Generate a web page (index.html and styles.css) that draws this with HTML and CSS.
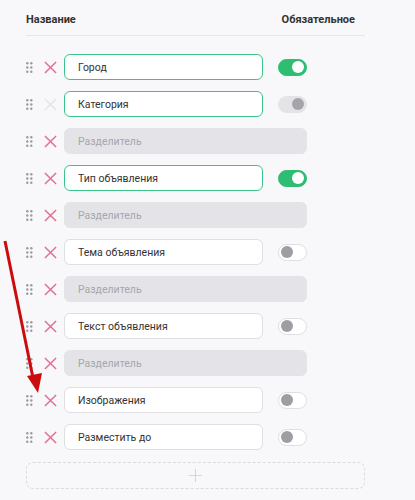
FILE: index.html
```html
<!DOCTYPE html>
<html lang="ru">
<head>
<meta charset="utf-8">
<link rel="stylesheet" href="styles.css">
</head>
<body>
<div class="panel">
  <div class="head">
    <span>Название</span>
    <span class="head-req">Обязательное</span>
  </div>
  <div class="rows">
    <div class="row">
      <svg class="drag" viewBox="0 0 7 11"><circle cx="1.3" cy="1.3" r="1.2"/><circle cx="5.3" cy="1.3" r="1.2"/><circle cx="1.3" cy="5.5" r="1.2"/><circle cx="5.3" cy="5.5" r="1.2"/><circle cx="1.3" cy="9.7" r="1.2"/><circle cx="5.3" cy="9.7" r="1.2"/></svg>
      <svg class="del" viewBox="0 0 14 14"><path d="M1 1L13 13M13 1L1 13"/></svg>
      <div class="field active">Город</div>
      <div class="toggle on"><span class="knob"></span></div>
    </div>
    <div class="row">
      <svg class="drag" viewBox="0 0 7 11"><circle cx="1.3" cy="1.3" r="1.2"/><circle cx="5.3" cy="1.3" r="1.2"/><circle cx="1.3" cy="5.5" r="1.2"/><circle cx="5.3" cy="5.5" r="1.2"/><circle cx="1.3" cy="9.7" r="1.2"/><circle cx="5.3" cy="9.7" r="1.2"/></svg>
      <svg class="del muted" viewBox="0 0 14 14"><path d="M1 1L13 13M13 1L1 13"/></svg>
      <div class="field active">Категория</div>
      <div class="toggle disabled"><span class="knob"></span></div>
    </div>
    <div class="row">
      <svg class="drag" viewBox="0 0 7 11"><circle cx="1.3" cy="1.3" r="1.2"/><circle cx="5.3" cy="1.3" r="1.2"/><circle cx="1.3" cy="5.5" r="1.2"/><circle cx="5.3" cy="5.5" r="1.2"/><circle cx="1.3" cy="9.7" r="1.2"/><circle cx="5.3" cy="9.7" r="1.2"/></svg>
      <svg class="del" viewBox="0 0 14 14"><path d="M1 1L13 13M13 1L1 13"/></svg>
      <div class="field sep">Разделитель</div>
    </div>
    <div class="row">
      <svg class="drag" viewBox="0 0 7 11"><circle cx="1.3" cy="1.3" r="1.2"/><circle cx="5.3" cy="1.3" r="1.2"/><circle cx="1.3" cy="5.5" r="1.2"/><circle cx="5.3" cy="5.5" r="1.2"/><circle cx="1.3" cy="9.7" r="1.2"/><circle cx="5.3" cy="9.7" r="1.2"/></svg>
      <svg class="del" viewBox="0 0 14 14"><path d="M1 1L13 13M13 1L1 13"/></svg>
      <div class="field active">Тип объявления</div>
      <div class="toggle on"><span class="knob"></span></div>
    </div>
    <div class="row">
      <svg class="drag" viewBox="0 0 7 11"><circle cx="1.3" cy="1.3" r="1.2"/><circle cx="5.3" cy="1.3" r="1.2"/><circle cx="1.3" cy="5.5" r="1.2"/><circle cx="5.3" cy="5.5" r="1.2"/><circle cx="1.3" cy="9.7" r="1.2"/><circle cx="5.3" cy="9.7" r="1.2"/></svg>
      <svg class="del" viewBox="0 0 14 14"><path d="M1 1L13 13M13 1L1 13"/></svg>
      <div class="field sep">Разделитель</div>
    </div>
    <div class="row">
      <svg class="drag" viewBox="0 0 7 11"><circle cx="1.3" cy="1.3" r="1.2"/><circle cx="5.3" cy="1.3" r="1.2"/><circle cx="1.3" cy="5.5" r="1.2"/><circle cx="5.3" cy="5.5" r="1.2"/><circle cx="1.3" cy="9.7" r="1.2"/><circle cx="5.3" cy="9.7" r="1.2"/></svg>
      <svg class="del" viewBox="0 0 14 14"><path d="M1 1L13 13M13 1L1 13"/></svg>
      <div class="field">Тема объявления</div>
      <div class="toggle"><span class="knob"></span></div>
    </div>
    <div class="row">
      <svg class="drag" viewBox="0 0 7 11"><circle cx="1.3" cy="1.3" r="1.2"/><circle cx="5.3" cy="1.3" r="1.2"/><circle cx="1.3" cy="5.5" r="1.2"/><circle cx="5.3" cy="5.5" r="1.2"/><circle cx="1.3" cy="9.7" r="1.2"/><circle cx="5.3" cy="9.7" r="1.2"/></svg>
      <svg class="del" viewBox="0 0 14 14"><path d="M1 1L13 13M13 1L1 13"/></svg>
      <div class="field sep">Разделитель</div>
    </div>
    <div class="row">
      <svg class="drag" viewBox="0 0 7 11"><circle cx="1.3" cy="1.3" r="1.2"/><circle cx="5.3" cy="1.3" r="1.2"/><circle cx="1.3" cy="5.5" r="1.2"/><circle cx="5.3" cy="5.5" r="1.2"/><circle cx="1.3" cy="9.7" r="1.2"/><circle cx="5.3" cy="9.7" r="1.2"/></svg>
      <svg class="del" viewBox="0 0 14 14"><path d="M1 1L13 13M13 1L1 13"/></svg>
      <div class="field">Текст объявления</div>
      <div class="toggle"><span class="knob"></span></div>
    </div>
    <div class="row">
      <svg class="drag" viewBox="0 0 7 11"><circle cx="1.3" cy="1.3" r="1.2"/><circle cx="5.3" cy="1.3" r="1.2"/><circle cx="1.3" cy="5.5" r="1.2"/><circle cx="5.3" cy="5.5" r="1.2"/><circle cx="1.3" cy="9.7" r="1.2"/><circle cx="5.3" cy="9.7" r="1.2"/></svg>
      <svg class="del" viewBox="0 0 14 14"><path d="M1 1L13 13M13 1L1 13"/></svg>
      <div class="field sep">Разделитель</div>
    </div>
    <div class="row">
      <svg class="drag" viewBox="0 0 7 11"><circle cx="1.3" cy="1.3" r="1.2"/><circle cx="5.3" cy="1.3" r="1.2"/><circle cx="1.3" cy="5.5" r="1.2"/><circle cx="5.3" cy="5.5" r="1.2"/><circle cx="1.3" cy="9.7" r="1.2"/><circle cx="5.3" cy="9.7" r="1.2"/></svg>
      <svg class="del" viewBox="0 0 14 14"><path d="M1 1L13 13M13 1L1 13"/></svg>
      <div class="field">Изображения</div>
      <div class="toggle"><span class="knob"></span></div>
    </div>
    <div class="row">
      <svg class="drag" viewBox="0 0 7 11"><circle cx="1.3" cy="1.3" r="1.2"/><circle cx="5.3" cy="1.3" r="1.2"/><circle cx="1.3" cy="5.5" r="1.2"/><circle cx="5.3" cy="5.5" r="1.2"/><circle cx="1.3" cy="9.7" r="1.2"/><circle cx="5.3" cy="9.7" r="1.2"/></svg>
      <svg class="del" viewBox="0 0 14 14"><path d="M1 1L13 13M13 1L1 13"/></svg>
      <div class="field">Разместить до</div>
      <div class="toggle"><span class="knob"></span></div>
    </div>
  </div>
  <div class="add">
    <svg class="plus" viewBox="0 0 14 14"><path d="M7 0V14M0 7H14"/></svg>
  </div>
</div>
<svg class="arrow" viewBox="0 0 60 170" width="60" height="170">
  <path d="M5 11L33 148" />
  <polygon points="27,146 42,143 38,163" />
</svg>
</body>
</html>
```
FILE: styles.css
```css
html, body {
  margin: 0;
  padding: 0;
}
body {
  background: #f8f8fa;
  font-family: Roboto, "Noto Sans", sans-serif;
  font-size: 10.5px;
  color: #333;
  width: 415px;
  height: 500px;
  position: relative;
  overflow: hidden;
}
.panel {
  padding: 13px 0 0 26px;
  width: 339px;
}
.head {
  display: flex;
  justify-content: space-between;
  font-weight: 700;
  font-size: 11px;
  color: #333;
  height: 16px;
  padding: 0 10px 6px 0;
  border-bottom: 1px solid #e6e6ea;
}
.rows {
  display: flex;
  flex-direction: column;
  gap: 11px;
  margin-top: 18px;
}
.row {
  display: flex;
  align-items: center;
  height: 26px;
}
.drag {
  width: 7px;
  height: 11px;
  fill: #9a9aa0;
  flex: none;
}
.del {
  width: 13px;
  height: 13px;
  margin-left: 11px;
  stroke: #e0708f;
  stroke-width: 1.6;
  fill: none;
  flex: none;
}
.del.muted {
  stroke: #e4e4e8;
}
.field {
  margin-left: 7px;
  box-sizing: border-box;
  width: 199px;
  height: 26px;
  border: 1.5px solid #dedee3;
  border-radius: 6px;
  background: #fff;
  padding-left: 13px;
  display: flex;
  align-items: center;
  color: #333;
  flex: none;
}
.field.active {
  border-color: #3cc38a;
}
.field.sep {
  width: 243px;
  background: #e4e4e8;
  border-color: #e4e4e8;
  color: #a6a6ac;
}
.toggle {
  margin-left: 15px;
  box-sizing: border-box;
  width: 29px;
  height: 17px;
  border-radius: 9px;
  border: 1.5px solid #dedee3;
  background: #fff;
  display: flex;
  align-items: center;
  padding: 0 2px;
  flex: none;
}
.toggle .knob {
  width: 12px;
  height: 12px;
  border-radius: 50%;
  background: #9d9da3;
}
.toggle.on {
  background: #2dbd73;
  border-color: #2dbd73;
  justify-content: flex-end;
}
.toggle.on .knob {
  background: #fff;
}
.toggle.disabled {
  background: #e4e4e8;
  border-color: #e4e4e8;
  justify-content: flex-end;
}
.toggle.disabled .knob {
  background: #a4a4aa;
}
.add {
  margin-top: 12px;
  box-sizing: border-box;
  width: 339px;
  height: 27px;
  border: 1px dashed #dadade;
  border-radius: 7px;
  display: flex;
  align-items: center;
  justify-content: center;
}
.plus {
  width: 13px;
  height: 13px;
  stroke: #d6d6da;
  stroke-width: 1.2;
  fill: none;
}
.arrow {
  position: absolute;
  left: 0;
  top: 230px;
}
.arrow path {
  stroke: #cc0c0c;
  stroke-width: 3;
  fill: none;
}
.arrow polygon {
  fill: #cc0c0c;
}
```
